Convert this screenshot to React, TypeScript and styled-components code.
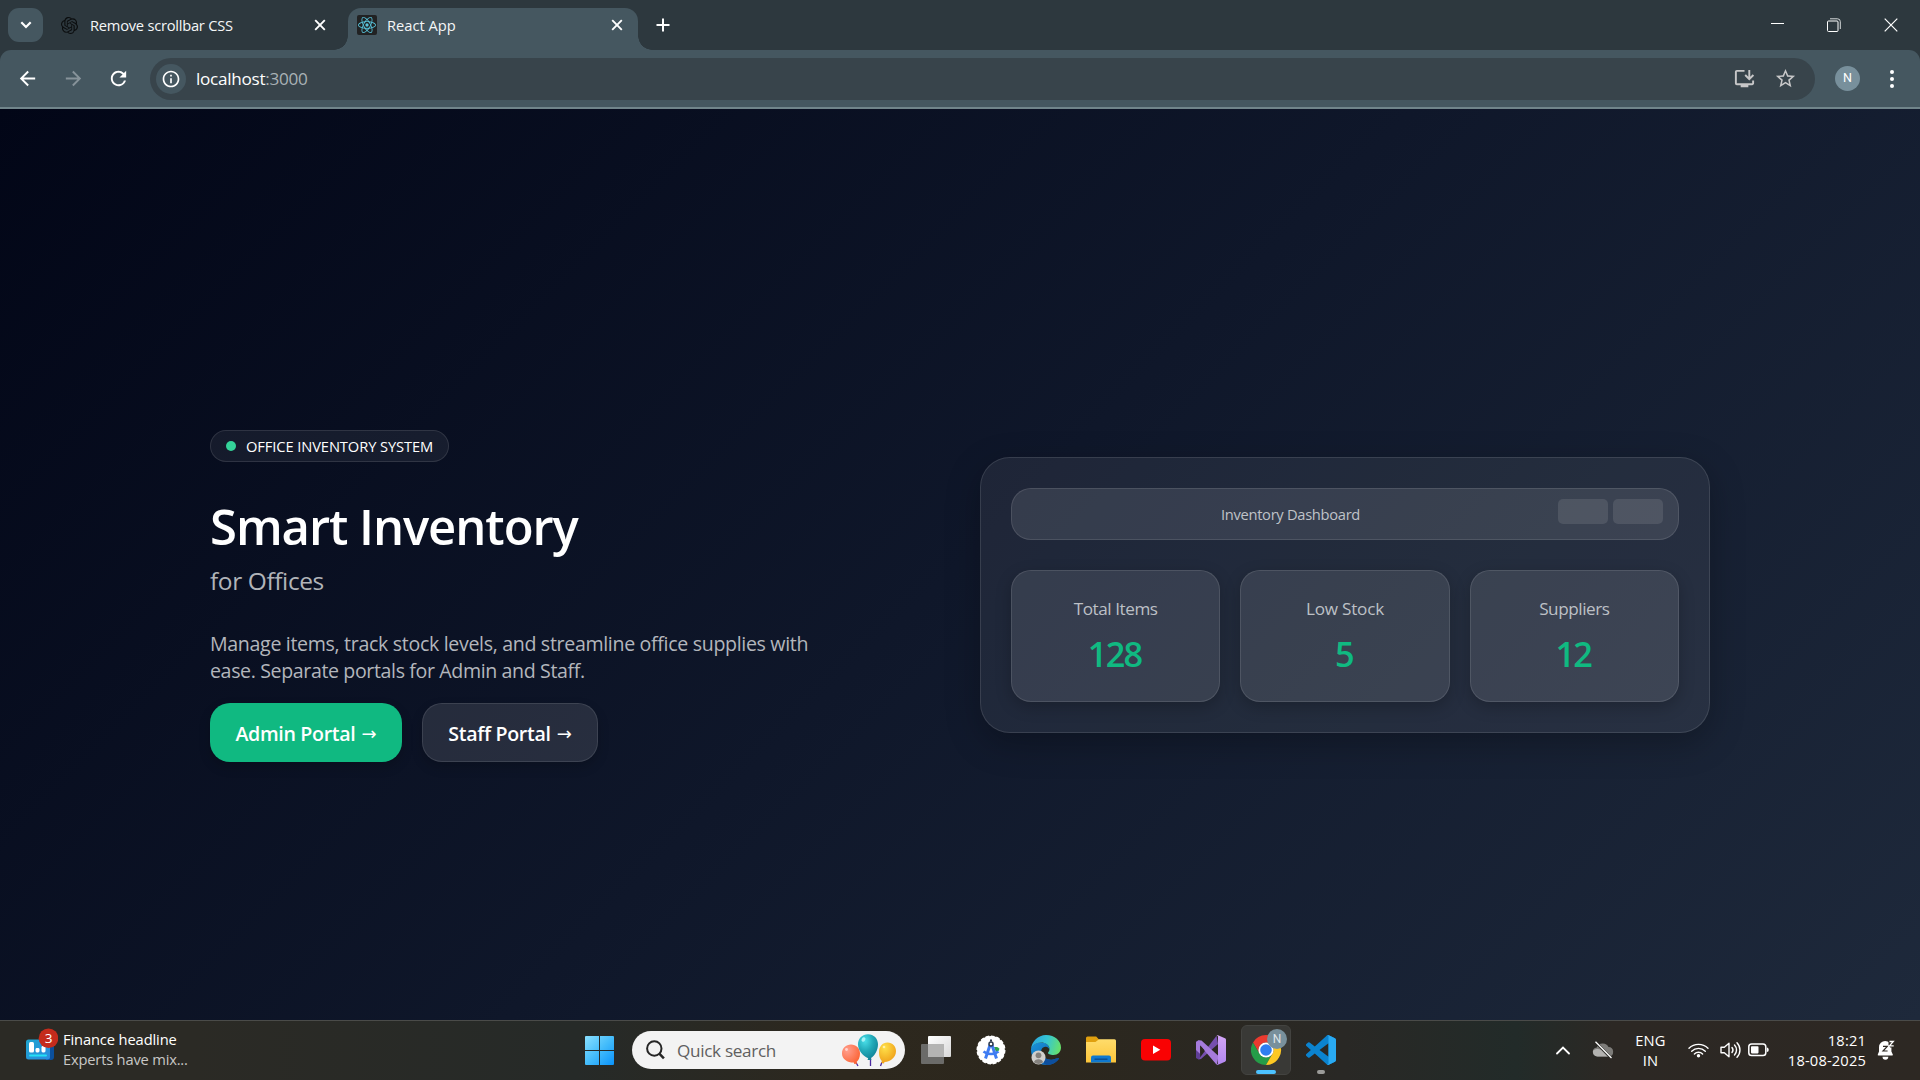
import React from 'react';
import styled, { createGlobalStyle } from 'styled-components';
import { SiOpenai, SiReact } from 'react-icons/si';
import {
  MdArrowBack,
  MdArrowForward,
  MdRefresh,
  MdInfoOutline,
  MdOutlineInstallDesktop,
  MdStarBorder,
} from 'react-icons/md';

const font = '"Open Sans", "Noto Sans", "DejaVu Sans", sans-serif';

const GlobalStyle = createGlobalStyle`
  * { box-sizing: border-box; }
  body { margin: 0; overflow: hidden; background: #020617; font-family: ${font}; }
  svg { display: block; flex: none; }
  h1, p { margin: 0; }
`;

const Screen = styled.div`
  display: flex;
  flex-direction: column;
  width: 1920px;
  height: 1080px;
  overflow: hidden;
`;

/* ---------- Browser chrome ---------- */

const TabStrip = styled.header`
  display: flex;
  align-items: flex-end;
  flex: none;
  height: 50px;
  background: #2d383e;
`;

const TabSearch = styled.div`
  display: grid;
  place-items: center;
  width: 35px;
  height: 34px;
  margin: 0 0 8px 8px;
  border-radius: 11px;
  background: #455760;
`;

const Tab = styled.div<{ $active?: boolean }>`
  position: relative;
  display: flex;
  align-items: center;
  flex: none;
  width: ${(p) => (p.$active ? 290 : 305)}px;
  height: 42px;
  padding: ${(p) => (p.$active ? '0 15px 8px 9px' : '0 22px 8px 18px')};
  border-radius: 13px 13px 0 0;
  background: ${(p) => (p.$active ? '#455760' : 'transparent')};

  &::before,
  &::after {
    content: '';
    display: ${(p) => (p.$active ? 'block' : 'none')};
    position: absolute;
    bottom: 0;
    width: 14px;
    height: 14px;
  }
  &::before {
    left: -14px;
    background: radial-gradient(circle at 0 0, transparent 13.5px, #455760 14px);
  }
  &::after {
    right: -14px;
    background: radial-gradient(circle at 100% 0, transparent 13.5px, #455760 14px);
  }
`;

const TabTitle = styled.span<{ $track: number; $gap: number }>`
  flex: 1;
  margin-left: ${(p) => p.$gap}px;
  padding-bottom: 1px;
  font-size: 14.7px;
  line-height: 20px;
  letter-spacing: ${(p) => p.$track}px;
  color: #f4f6f7;
  white-space: nowrap;
`;

const ReactBadge = styled.div`
  display: grid;
  place-items: center;
  width: 20px;
  height: 20px;
  border-radius: 2px;
  background: #212223;
  color: #58c4dc;
`;

const NewTab = styled.div`
  display: grid;
  place-items: center;
  width: 50px;
  height: 50px;
`;

const WindowButtons = styled.div`
  display: flex;
  align-self: stretch;
  margin-left: auto;
  padding: 0 1px 1px 0;
`;

const WindowButton = styled.div`
  display: grid;
  place-items: center;
  width: 57px;
`;

const ToolbarBack = styled.div`
  flex: none;
  background: #2d383e;
`;

const Toolbar = styled.div`
  display: flex;
  align-items: center;
  height: 59px;
  padding: 0 16px;
  border-bottom: 2px solid #71858b;
  border-radius: 11px 11px 0 0;
  background: #455760;
  color: #fff;
`;

const NavButtons = styled.nav`
  display: flex;
  width: 134px;
  margin: 0 11px 0 -11px;
  padding-bottom: 1px;
`;

const NavButton = styled.div<{ $dim?: boolean }>`
  display: grid;
  place-items: center;
  flex: none;
  width: 45.5px;
  color: ${(p) => (p.$dim ? '#87939a' : '#fff')};
`;

const AddressBar = styled.div`
  display: flex;
  align-items: center;
  flex: 1;
  height: 42px;
  padding: 0 18px 0 6px;
  border-radius: 21px;
  background: #38444b;
  color: #c7c7c8;
`;

const SiteInfo = styled.div`
  display: grid;
  place-items: center;
  width: 30px;
  height: 30px;
  border-radius: 50%;
  background: #455760;
  color: #fff;
`;

const Url = styled.span`
  flex: 1;
  margin-left: 10px;
  padding-top: 1px;
  font-size: 17.15px;
  line-height: 24px;
  letter-spacing: -0.28px;
  color: #a9b2b6;

  b { font-weight: 400; color: #fff; }
`;

const BarActions = styled.div`
  display: flex;
  align-items: center;
  gap: 18px;
`;

const Avatar = styled.div`
  display: grid;
  place-items: center;
  width: 25px;
  height: 25px;
  margin: 0 30px 0 20px;
  border-radius: 50%;
  background: #78909c;
  font: 12.5px/1 Roboto, sans-serif;
  color: #fff;
`;

const MenuDots = styled.div`
  display: grid;
  gap: 3px;
  width: 4px;
  margin-right: 10px;

  i { width: 4px; height: 4px; border-radius: 50%; background: #fff; }
`;

/* ---------- Landing page ---------- */

const Page = styled.main`
  flex: 1;
  display: flex;
  justify-content: space-between;
  align-items: flex-start;
  padding: 321px 210px 0;
  background: linear-gradient(135deg, #020617 0%, #0f172a 50%, #1e293b 100%);
`;

const Intro = styled.section`
  display: flex;
  flex-direction: column;
  align-items: flex-start;
`;

const Pill = styled.div`
  display: flex;
  align-items: center;
  gap: 10px;
  width: 239px;
  height: 32px;
  padding-left: 15px;
  border: 1px solid rgba(255, 255, 255, 0.11);
  border-radius: 16px;
  background: rgba(255, 255, 255, 0.06);
  font-size: 14.7px;
  line-height: 20px;
  letter-spacing: -0.1px;
  color: #fff;
  white-space: nowrap;

  i { width: 10px; height: 10px; border-radius: 50%; background: #34d399; }
`;

const Title = styled.h1`
  margin-top: 34px;
  font-size: 49px;
  font-weight: 600;
  line-height: 60px;
  letter-spacing: -1.06px;
  color: #fff;
`;

const Subtitle = styled.p`
  margin-top: 10px;
  font-size: 24.5px;
  line-height: 30px;
  letter-spacing: -0.4px;
  color: #b1b4b9;
`;

const Lead = styled.p`
  margin-top: 34px;
  font-size: 19.6px;
  line-height: 27px;
  letter-spacing: -0.33px;
  color: #b3b6bc;
  white-space: nowrap;

  span { letter-spacing: -0.38px; }
`;

const Actions = styled.div`
  display: flex;
  gap: 20px;
  margin-top: 19px;
`;

const PortalButton = styled.button<{ $primary?: boolean }>`
  display: flex;
  align-items: center;
  justify-content: center;
  gap: 6px;
  width: ${(p) => (p.$primary ? 192 : 176)}px;
  height: 59px;
  padding: 2px 0 0;
  border: ${(p) => (p.$primary ? '0' : '1px solid rgba(255, 255, 255, 0.1)')};
  border-radius: 20px;
  background: ${(p) => (p.$primary ? '#10b981' : 'rgba(255, 255, 255, 0.11)')};
  box-shadow: 0 5px 12px rgba(0, 0, 0, 0.18);
  font: 600 19.6px/27px ${font};
  letter-spacing: -0.32px;
  color: #fff;
  white-space: nowrap;

  span { font: 400 18px/20px "DejaVu Sans", sans-serif; letter-spacing: 0; }
`;

const Dashboard = styled.section`
  width: 730px;
  height: 276px;
  margin-top: 27px;
  padding: 30px;
  border: 1px solid rgba(255, 255, 255, 0.11);
  border-radius: 30px;
  background: rgba(255, 255, 255, 0.065);
  box-shadow: 0 10px 34px rgba(0, 0, 0, 0.26);
`;

const DashboardBar = styled.div`
  display: flex;
  height: 52px;
  padding: 10px 15px;
  border: 1px solid rgba(255, 255, 255, 0.11);
  border-radius: 20px;
  background: rgba(255, 255, 255, 0.1);
`;

const DashboardTitle = styled.div`
  flex: 1;
  padding-right: 4px;
  font-size: 14.7px;
  line-height: 31px;
  letter-spacing: -0.3px;
  text-align: center;
  color: #bfc2c8;
`;

const Placeholders = styled.div`
  display: flex;
  gap: 5px;

  i { width: 50px; height: 25px; border-radius: 5px; background: rgba(255, 255, 255, 0.1); }
`;

const Stats = styled.div`
  display: grid;
  grid-template-columns: repeat(3, 1fr);
  gap: 20px;
  margin-top: 30px;
`;

const Stat = styled.div`
  height: 132px;
  padding-top: 25px;
  border: 1px solid rgba(255, 255, 255, 0.11);
  border-radius: 20px;
  background: rgba(255, 255, 255, 0.1);
  box-shadow: 0 5px 16px rgba(0, 0, 0, 0.22);
  text-align: center;
`;

const StatLabel = styled.div<{ $track: number }>`
  font-size: 17.15px;
  line-height: 26px;
  letter-spacing: ${(p) => p.$track}px;
  color: #bdc0c6;
`;

const StatValue = styled.div`
  margin: 12px 2px 0 0;
  font-size: 34.3px;
  font-weight: 600;
  line-height: 40px;
  letter-spacing: -1.7px;
  color: #10b981;
`;

/* ---------- Taskbar ---------- */

const Taskbar = styled.footer`
  display: grid;
  grid-template-columns: 585px 1fr 375px;
  flex: none;
  height: 60px;
  border-top: 1px solid #4a4b49;
  background: linear-gradient(90deg, #2b2a25 0%, #2b2a25 10%, #262a28 30%, #2d281e 44%, #2c271d 54%, #292825 70%, #222b29 79%, #2c2824 84%, #2d2823 100%);
  color: #fff;
`;

const Widget = styled.div`
  display: flex;
  padding: 7px 0 0 24px;
`;

const WidgetText = styled.div`
  margin: 1px 0 0 5px;
  font-size: 14.7px;
  line-height: 20px;
  letter-spacing: -0.12px;
  color: #fff;

  small { display: block; font-size: inherit; letter-spacing: -0.19px; color: #c8c7c5; }
`;

const Apps = styled.div`
  display: flex;
  align-items: center;
  padding-bottom: 1px;
`;

const SearchBox = styled.div`
  display: flex;
  align-items: center;
  width: 273px;
  height: 38px;
  margin: 0 16px 0 18px;
  padding: 0 8px 0 13px;
  border-radius: 19px;
  background: #f3f3f3;
  font-size: 17.15px;
  letter-spacing: -0.32px;
  color: #5f5f60;

  span { flex: 1; margin-left: 12px; }
`;

const TaskViewSlot = styled.div`
  margin-right: 15px;
`;

const AppSlot = styled.div<{ $open?: boolean; $mark?: 'active' | 'idle' }>`
  position: relative;
  display: grid;
  place-items: center;
  width: 50px;
  height: 50px;
  margin-right: 5px;
  border: 1px solid ${(p) => (p.$open ? '#434340' : 'transparent')};
  border-radius: 6px;
  background: ${(p) => (p.$open ? '#393936' : 'transparent')};

  &::after {
    content: '';
    position: absolute;
    bottom: 0;
    left: 50%;
    width: ${(p) => (p.$mark === 'active' ? 20 : p.$mark ? 8 : 0)}px;
    height: 4px;
    border-radius: 2px;
    background: ${(p) => (p.$mark === 'active' ? '#4cc2ff' : '#9b9b99')};
    transform: translateX(-50%);
  }
`;

const ChromeLift = styled.div`
  margin: -6px 0 0 5px;
`;

const Tray = styled.div`
  display: flex;
  align-items: center;
  padding-bottom: 1px;
`;

const TrayItem = styled.div<{ $w: number }>`
  display: grid;
  place-items: center;
  flex: none;
  width: ${(p) => p.$w}px;
`;

const TrayText = styled.div<{ $w: number; $right?: boolean }>`
  flex: none;
  width: ${(p) => p.$w}px;
  font-size: 14.7px;
  line-height: 20.5px;
  letter-spacing: 0.15px;
  text-align: ${(p) => (p.$right ? 'right' : 'center')};
  white-space: pre-line;
`;

/* ---------- Icons ---------- */

const Cross = () => (
  <svg width="12" height="12" viewBox="0 0 12 12" stroke="#fff" strokeWidth="1.9">
    <path d="M1.2 1.2 10.8 10.8M10.8 1.2 1.2 10.8" />
  </svg>
);

const WidgetIcon = () => (
  <svg width="34" height="34" viewBox="0 0 34 34">
    <defs>
      <linearGradient id="wg" x1="0" y1="0" x2="1" y2="1">
        <stop offset="0" stopColor="#1fa5cf" />
        <stop offset="1" stopColor="#2a8be0" />
      </linearGradient>
    </defs>
    <path d="M22 14h8v15a3 3 0 0 1-3 3h-5z" fill="#0b4f9c" />
    <rect x="2" y="11.500" width="24" height="20" rx="2.5" fill="url(#wg)" />
    <rect x="5" y="14" width="5" height="10.500" rx="1.5" fill="#fff" />
    <rect x="11.5" y="20" width="4" height="4.500" rx="1.4" fill="#fff" />
    <rect x="17.5" y="18" width="4" height="6.500" rx="1.4" fill="#fff" />
    <rect x="5" y="26.5" width="18" height="2" rx="1" fill="#24e0f5" />
    <circle cx="24.5" cy="10.200" r="9.800" fill="#c42b1c" />
    <text x="24.5" y="15.200" textAnchor="middle" fontFamily="Open Sans" fontSize="13.5" fill="#fff">3</text>
  </svg>
);

const StartIcon = () => (
  <svg width="29" height="29" viewBox="0 0 29 29">
    <defs>
      <linearGradient id="st" x1="0" y1="0" x2="29" y2="29" gradientUnits="userSpaceOnUse">
        <stop offset="0" stopColor="#8ae0ff" />
        <stop offset=".5" stopColor="#45bdfb" />
        <stop offset="1" stopColor="#0a93fb" />
      </linearGradient>
    </defs>
    <path fill="url(#st)" d="M1 0h13v14H0V1a1 1 0 0 1 1-1zM15 0h13a1 1 0 0 1 1 1v13H15zM0 15h14v14H1a1 1 0 0 1-1-1zM15 15h14v13a1 1 0 0 1-1 1H15z" />
  </svg>
);

const SearchIcon = () => (
  <svg width="20" height="20" viewBox="0 0 20 20" fill="none" stroke="#262626" strokeWidth="2">
    <circle cx="9.300" cy="8.5" r="7.200" />
    <path d="m14.300 13.6 4.6 4.8" strokeWidth="2.5" />
  </svg>
);

const Balloons = () => (
  <svg width="56" height="34" viewBox="0 0 56 34">
    <defs>
      <radialGradient id="b1" cx=".3" cy=".3" r=".8">
        <stop offset="0" stopColor="#ff9f8e" />
        <stop offset="1" stopColor="#fc6232" />
      </radialGradient>
      <radialGradient id="b2" cx=".35" cy=".25" r=".8">
        <stop offset="0" stopColor="#4be0ea" />
        <stop offset=".5" stopColor="#22a9b8" />
        <stop offset="1" stopColor="#107f95" />
      </radialGradient>
      <radialGradient id="b3" cx=".35" cy=".25" r=".8">
        <stop offset="0" stopColor="#ffe04a" />
        <stop offset="1" stopColor="#ee9c16" />
      </radialGradient>
    </defs>
    <path d="M15 29.5l2 3.5M29.5 25v8M41 29l-1.5 4" stroke="#4b2aa0" strokeWidth="1.3" />
    <path d="M10 11.5c5 0 9 3.700 9 9 0 4-1.500 7-3.500 8.500l.8 1.500-3 .5-.5-1.400C6 29.500 1 26 1 20.500c0-5.300 4-9 9-9z" fill="url(#b1)" />
    <path d="M46.500 9.500c5 0 8.500 3.700 8.500 8.500 0 6-5 10.500-11.500 11l-.5 1.500-3-.8 1-1.400c-2-2-3-4.800-3-9 0-5.800 3.500-9.800 8.500-9.800z" fill="url(#b3)" />
    <path d="M27 1.300c5.700 0 10 4.200 10 10 0 6-3.500 11.700-7.300 14l.8 1.700h-4l.7-1.700C22 23 17 17.300 17 11.300c0-5.800 4.300-10 10-10z" fill="url(#b2)" />
    <ellipse cx="22.500" cy="6.500" rx="1.800" ry="2.300" transform="rotate(35 22.500 6.500)" fill="#a5f3f6" />
    <circle cx="5.500" cy="16.500" r="1.400" fill="#ffd4cd" />
    <circle cx="43" cy="14" r="1.300" fill="#fff1a8" />
  </svg>
);

const TaskViewIcon = () => (
  <svg width="30" height="28" viewBox="0 0 30 28">
    <defs>
      <linearGradient id="tv" x1="0" y1="0" x2="1" y2="1">
        <stop offset="0" stopColor="#fff" />
        <stop offset="1" stopColor="#d8d8d8" />
      </linearGradient>
    </defs>
    <rect x="0" y="8" width="23" height="20" rx="1" fill="#6b6b69" />
    <rect x="7" y="0" width="23" height="21" rx="1" fill="url(#tv)" />
    <path d="M7 8h16v13H7z" fill="#b4b4b3" />
  </svg>
);

const AndroidStudioIcon = () => (
  <svg width="30" height="30" viewBox="0 0 30 30">
    <circle cx="15" cy="15" r="13.900" fill="#fff" />
    <circle cx="15" cy="15" r="13.800" fill="none" stroke="#fff" strokeWidth="1.400" strokeDasharray="3.600 1.780" />
    <path d="M18 12h3a2.500 2.500 0 0 1 2 3.500l-3 1.500z" fill="#2da44e" />
    <path d="M14.200 9.500 9.500 23.500M15.800 9.500l4.700 14" stroke="#3f7cf2" strokeWidth="3" fill="none" />
    <path d="M7.500 16.500c4 3.300 11 3.300 15 0" stroke="#3f7cf2" strokeWidth="2.600" fill="none" />
    <circle cx="15" cy="9" r="2" fill="#fff" stroke="#2d3a4e" strokeWidth="1.500" />
    <path d="M15 4.500v2" stroke="#2d3a4e" strokeWidth="2" />
  </svg>
);

const EdgeIcon = () => (
  <svg width="30" height="30" viewBox="0 0 30 30">
    <defs>
      <linearGradient id="eg1" x1="0" y1=".3" x2="1" y2=".5">
        <stop offset="0" stopColor="#2aa5e0" />
        <stop offset=".5" stopColor="#35c5d4" />
        <stop offset="1" stopColor="#66e06c" />
      </linearGradient>
      <linearGradient id="eg2" x1="0" y1="0" x2="1" y2="1">
        <stop offset="0" stopColor="#1a93dc" />
        <stop offset="1" stopColor="#0c59a4" />
      </linearGradient>
    </defs>
    <path d="M0 14C1.500 9 6 7.500 10 7.500c5.500 0 9 3.500 8.500 7.500-.3-2-2-3.500-4.200-3.300C11 12 9.500 15 10.500 18.500 12 23 17 25.500 22 24.500c3-.6 4.500-1.700 5.500-1.500.7.300.3 1-.5 2C24.500 28 20 30 15 30 6.500 30 0 23.500 0 15z" fill="url(#eg2)" />
    <path d="M10.500 18.500C12 23 17 25.500 22 24.500c3-.6 4.500-1.700 5.500-1.500.7.300.3 1-.5 2C24.500 28 20 30 15.500 30c-4.500-2-7-7-5-11.500z" fill="#0d4f9e" />
    <path d="M0 14.500C.5 6.500 7 0 15 0c9 0 15 6 15 12.500 0 4.500-3.200 7.500-7.500 7.500-3.500 0-5.700-1.200-5.500-2.300.2-.8 1.500-1.200 1.500-3.700 0-4-4-6.500-8.500-6.500-5 0-9 3-10 7z" fill="url(#eg1)" />
    <circle cx="7.500" cy="22.500" r="7" fill="#d0cfcd" />
    <circle cx="7.500" cy="20.300" r="2.900" fill="#84817d" />
    <path d="M2.900 27.200a4.700 3.800 0 0 1 9.200 0 7 7 0 0 1-9.200 0z" fill="#84817d" />
  </svg>
);

const FolderIcon = () => (
  <svg width="30" height="28" viewBox="0 0 30 28">
    <defs>
      <linearGradient id="fd" x1="0" y1="0" x2="0" y2="1">
        <stop offset="0" stopColor="#ffdc6b" />
        <stop offset="1" stopColor="#fcc53a" />
      </linearGradient>
    </defs>
    <path d="M0 2a1.500 1.500 0 0 1 1.500-1.500h8.700L13 3.500v4H0z" fill="#e0a00f" />
    <path d="M0 6h9.500L13 3.300h15.500A1.500 1.500 0 0 1 30 4.800V26.500H0z" fill="url(#fd)" />
    <path d="M5 26.500v-5A2 2 0 0 1 7 19.500h16a2 2 0 0 1 2 2v5z" fill="#0f79d0" />
    <rect x="8.500" y="22.500" width="13" height="1.400" fill="#0a4c8e" />
  </svg>
);

const YouTubeIcon = () => (
  <svg width="30" height="22" viewBox="0 0 30 22">
    <rect width="30" height="21.500" rx="4" fill="#f90203" />
    <path d="M12 6.500v8.500l7.300-4.200z" fill="#fff" />
  </svg>
);

const VisualStudioIcon = () => (
  <svg width="30" height="30" viewBox="0 0 30 30">
    <defs>
      <linearGradient id="vs" x1="0" y1="0" x2="0" y2="1">
        <stop offset="0" stopColor="#d3a6f5" />
        <stop offset="1" stopColor="#b286f0" />
      </linearGradient>
    </defs>
    <path d="M0 6.800 2.500 5.300 4.200 6v17.500l-1.700.9L0 23z" fill="#5f3e97" />
    <path d="M2.500 24.600 20.500.8 22 9 5 24z" fill="#764fae" />
    <path d="M2.500 5.200 5.500 5.600 22.500 21l-1.500 8.600a2 2 0 0 1-1-.6L4.200 10.500V19L0 15V7z" fill="#a67bdc" />
    <path d="M4.200 10.500 8.300 15l-4.100 4.500z" fill="#2c281f" />
    <path d="M20.300.7A1.500 1.500 0 0 1 22 .2l7 3a1.700 1.700 0 0 1 1 1.600v20.400a1.700 1.700 0 0 1-1 1.600l-7 3a1.500 1.500 0 0 1-1.700-.5c.9.400 1.700-.1 1.700-1V1.900c0-.9-.8-1.600-1.700-1.200z" fill="url(#vs)" />
  </svg>
);

const ChromeIcon = () => (
  <svg width="36" height="36" viewBox="0 0 36 36">
    <path d="M2 13.500A15 15 0 0 1 28 13.500H15A7.500 7.500 0 0 0 8.500 24.700z" fill="#ea3a2f" />
    <path d="M2 13.500 8.500 24.700A7.500 7.500 0 0 0 21.500 24.700L15 36A15 15 0 0 1 2 13.500z" fill="#259c48" />
    <path d="M15 13.500h13A15 15 0 0 1 15 36l6.500-11.300A7.500 7.500 0 0 0 15 13.500z" fill="#fdc823" />
    <circle cx="15" cy="21" r="7.600" fill="#fff" />
    <circle cx="15" cy="21" r="5.800" fill="#2f7df0" />
    <circle cx="26" cy="10" r="10" fill="#78909c" />
    <text x="26" y="14.400" textAnchor="middle" fontFamily="Roboto" fontSize="12" fill="#dfe6e9">N</text>
  </svg>
);

const VSCodeIcon = () => (
  <svg width="30" height="30" viewBox="0 0 24 24">
    <path fill="#0b83cf" d="M23.150 2.587 18.210.210a1.494 1.494 0 0 0-1.705.290l-9.460 8.630-4.120-3.128a.999.999 0 0 0-1.276.057L.327 7.261A1 1 0 0 0 .326 8.740L3.899 12 .326 15.260a1 1 0 0 0 .001 1.479L1.650 17.940a.999.999 0 0 0 1.276.057l4.120-3.128 9.460 8.630a1.492 1.492 0 0 0 1.704.290l4.942-2.377A1.500 1.500 0 0 0 24 20.060V3.939a1.500 1.500 0 0 0-.850-1.352zm-5.146 14.861L10.826 12l7.178-5.448v10.896z" />
    <path fill="#29aaf3" d="M16.500.5A1.494 1.494 0 0 1 18.210.210l4.940 2.377A1.500 1.500 0 0 1 24 3.939V20.060a1.500 1.500 0 0 1-.850 1.350l-4.940 2.380a1.490 1.490 0 0 1-1.700-.290c.6.500 1.494.100 1.494-.700V1.200c0-.8-.9-1.200-1.494-.7z" />
  </svg>
);

const CloudOffIcon = () => (
  <svg width="22" height="18" viewBox="0 0 22 18">
    <path d="M5.500 15.500a5 4.500 0 0 1-.7-8.900A6.200 5.800 0 0 1 16.500 6a4.900 4.800 0 0 1 .7 9.500z" fill="#7d7c79" />
    <path d="M1.200 9.500c4-2.500 7.300-1.500 10.300.8l6.500 5.200H5.500A4.500 4.500 0 0 1 1.200 9.500z" fill="#b3b2b0" />
    <path d="M3.500 1 19 17" stroke="#2b2a26" strokeWidth="2.600" />
    <path d="M3.500.8 19.500 17" stroke="#fff" strokeWidth="1.300" />
  </svg>
);

const WifiIcon = () => (
  <svg width="21" height="16" viewBox="0 0 21 16" fill="none" stroke="#fff" strokeWidth="1.400" strokeLinecap="round">
    <path d="M1 6.300a13.400 13.400 0 0 1 19 0M3.700 9.200a9.600 9.600 0 0 1 13.600 0M6.400 11.900a5.800 5.800 0 0 1 8.200 0" />
    <circle cx="10.500" cy="13.800" r="1.700" fill="#fff" stroke="none" />
  </svg>
);

const VolumeIcon = () => (
  <svg width="21" height="18" viewBox="0 0 21 18" fill="none" stroke="#fff" strokeWidth="1.400" strokeLinecap="round" strokeLinejoin="round">
    <path d="M1 6.300h3.300L9 2.200v13.600l-4.700-4.100H1z" />
    <path d="M12 6.500a4 4 0 0 1 0 5M14.500 4a7.200 7.200 0 0 1 0 10M17 1.700a10.500 10.500 0 0 1 0 14.600" />
  </svg>
);

const BatteryIcon = () => (
  <svg width="21" height="14" viewBox="0 0 21 14">
    <rect x=".8" y="1" width="17" height="11.600" rx="2.800" fill="none" stroke="#fff" strokeWidth="1.500" />
    <rect x="3" y="3.200" width="7.500" height="7.200" rx=".8" fill="#fff" />
    <path d="M18.800 4.500c1.300 0 1.900 1 1.900 2.300s-.6 2.300-1.900 2.300z" fill="#fff" />
  </svg>
);

const BellIcon = () => (
  <svg width="18" height="20" viewBox="0 0 18 20">
    <path d="M.8 14.500 2 11.500V7.200a6.200 6.200 0 0 1 12.400 0v4.300l1.400 3a.8.8 0 0 1-.7 1.100H1.500a.8.8 0 0 1-.7-1.100z" fill="#fff" />
    <path d="M5.500 16.800h5.800a2.900 2.900 0 0 1-5.800 0z" fill="#fff" />
    <path d="M11.500 0H18v7.500h-4.800l-1.700-3z" fill="#2d2823" />
    <path d="M6 6.300h4.300l-4.300 4.700h4.600" fill="none" stroke="#2d2823" strokeWidth="1.200" />
    <path d="M12.500 1.500h3.800l-3.800 4.300h4.200" fill="none" stroke="#fff" strokeWidth="1.300" />
  </svg>
);

const stats = [
  { label: 'Total Items', value: '128', track: -0.44 },
  { label: 'Low Stock', value: '5', track: -0.23 },
  { label: 'Suppliers', value: '12', track: -0.45 },
];

export default function App() {
  return (
    <Screen>
      <GlobalStyle />
      <TabStrip>
        <TabSearch>
          <svg width="12" height="8" viewBox="0 0 12 8" fill="none" stroke="#fff" strokeWidth="2.200">
            <path d="M1.300 1.300 6 6l4.700-4.700" />
          </svg>
        </TabSearch>
        <Tab>
          <SiOpenai size={17} color="#0b0d0e" />
          <TabTitle $track={-0.25} $gap={12}>Remove scrollbar CSS</TabTitle>
          <Cross />
        </Tab>
        <Tab $active>
          <ReactBadge><SiReact size={18} /></ReactBadge>
          <TabTitle $track={0} $gap={10}>React App</TabTitle>
          <Cross />
        </Tab>
        <NewTab>
          <svg width="14" height="14" viewBox="0 0 14 14" stroke="#fff" strokeWidth="2">
            <path d="M7 .5v13M.5 7h13" />
          </svg>
        </NewTab>
        <WindowButtons>
          <WindowButton>
            <svg width="14" height="3" viewBox="0 0 14 3"><rect x="1" y="0" width="13" height="1" fill="#fff" /></svg>
          </WindowButton>
          <WindowButton>
            <svg width="14" height="14" viewBox="0 0 14 14" fill="none" stroke="#fff">
              <rect x=".5" y="3" width="10.500" height="10.500" rx="1" />
              <path d="M3 .8h7.500a2.800 2.800 0 0 1 2.800 2.800V11" stroke="#d5d9da" />
            </svg>
          </WindowButton>
          <WindowButton>
            <svg width="14" height="14" viewBox="0 0 14 14" stroke="#fff" strokeWidth="1.200">
              <path d="M.7.700 13.300 13.300M13.300.700.700 13.300" />
            </svg>
          </WindowButton>
        </WindowButtons>
      </TabStrip>

      <ToolbarBack>
        <Toolbar>
          <NavButtons>
            <NavButton><MdArrowBack size={23} /></NavButton>
            <NavButton $dim><MdArrowForward size={23} /></NavButton>
            <NavButton><MdRefresh size={23} /></NavButton>
          </NavButtons>
          <AddressBar>
            <SiteInfo><MdInfoOutline size={20} /></SiteInfo>
            <Url><b>localhost</b>:3000</Url>
            <BarActions>
              <MdOutlineInstallDesktop size={23} />
              <MdStarBorder size={23} />
            </BarActions>
          </AddressBar>
          <Avatar>N</Avatar>
          <MenuDots><i /><i /><i /></MenuDots>
        </Toolbar>
      </ToolbarBack>

      <Page>
        <Intro>
          <Pill><i />OFFICE INVENTORY SYSTEM</Pill>
          <Title>Smart Inventory</Title>
          <Subtitle>for Offices</Subtitle>
          <Lead>
            Manage items, track stock levels, and streamline office supplies with
            <br />
            <span>ease. Separate portals for Admin and Staff.</span>
          </Lead>
          <Actions>
            <PortalButton $primary>Admin Portal <span>→</span></PortalButton>
            <PortalButton>Staff Portal <span>→</span></PortalButton>
          </Actions>
        </Intro>

        <Dashboard>
          <DashboardBar>
            <DashboardTitle>Inventory Dashboard</DashboardTitle>
            <Placeholders><i /><i /></Placeholders>
          </DashboardBar>
          <Stats>
            {stats.map((s) => (
              <Stat key={s.label}>
                <StatLabel $track={s.track}>{s.label}</StatLabel>
                <StatValue>{s.value}</StatValue>
              </Stat>
            ))}
          </Stats>
        </Dashboard>
      </Page>

      <Taskbar>
        <Widget>
          <WidgetIcon />
          <WidgetText>
            Finance headline
            <small>Experts have mix...</small>
          </WidgetText>
        </Widget>
        <Apps>
          <StartIcon />
          <SearchBox>
            <SearchIcon />
            <span>Quick search</span>
            <Balloons />
          </SearchBox>
          <TaskViewSlot><TaskViewIcon /></TaskViewSlot>
          <AppSlot><AndroidStudioIcon /></AppSlot>
          <AppSlot><EdgeIcon /></AppSlot>
          <AppSlot><FolderIcon /></AppSlot>
          <AppSlot><YouTubeIcon /></AppSlot>
          <AppSlot><VisualStudioIcon /></AppSlot>
          <AppSlot $open $mark="active"><ChromeLift><ChromeIcon /></ChromeLift></AppSlot>
          <AppSlot $mark="idle"><VSCodeIcon /></AppSlot>
        </Apps>
        <Tray>
          <TrayItem $w={36}>
            <svg width="14" height="9" viewBox="0 0 14 9" fill="none" stroke="#fff" strokeWidth="1.800" strokeLinecap="round">
              <path d="M1 7.500 7 1.500l6 6" />
            </svg>
          </TrayItem>
          <TrayItem $w={44}><CloudOffIcon /></TrayItem>
          <TrayText $w={51}>{'ENG\nIN'}</TrayText>
          <TrayItem $w={44}><WifiIcon /></TrayItem>
          <TrayItem $w={16}><VolumeIcon /></TrayItem>
          <TrayItem $w={44}><BatteryIcon /></TrayItem>
          <TrayText $w={86} $right>{'18:21\n18-08-2025'}</TrayText>
          <TrayItem $w={39}><BellIcon /></TrayItem>
        </Tray>
      </Taskbar>
    </Screen>
  );
}
